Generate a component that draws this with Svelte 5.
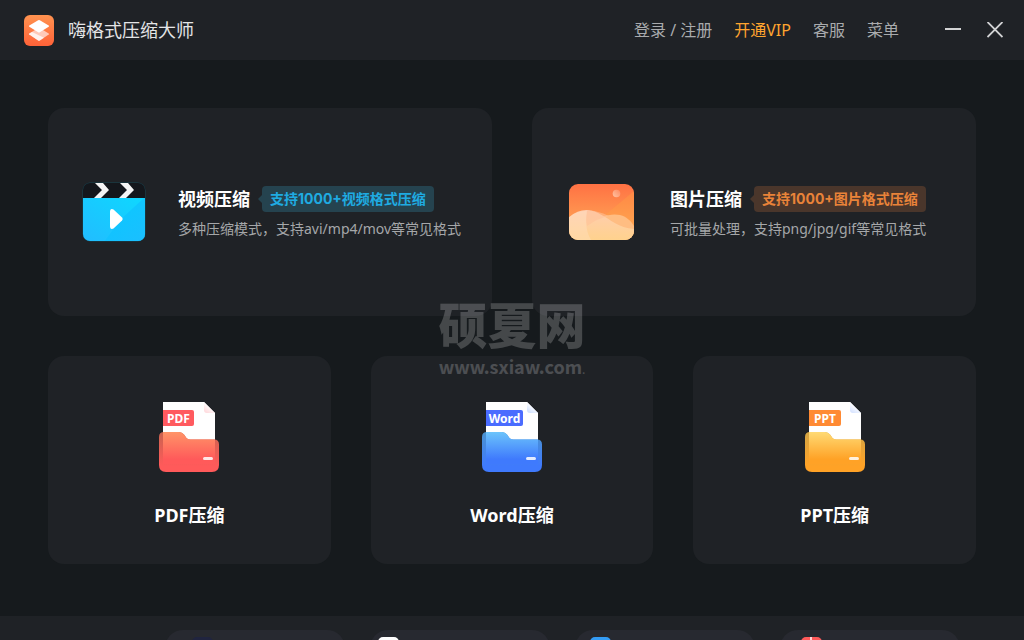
<script>
  const features = [
    { kind: 'video', title: '视频压缩', badge: '支持1000+视频格式压缩', text: '多种压缩模式，支持avi/mp4/mov等常见格式' },
    { kind: 'image', title: '图片压缩', badge: '支持1000+图片格式压缩', text: '可批量处理，支持png/jpg/gif等常见格式' }
  ];
  const documents = [
    { name: 'PDF', tag: '#ff5a5f', tagWidth: 31, top: '#ff9468', bottom: '#ff5a5a', side: '#c9634f', shade: '#ffd9dc' },
    { name: 'Word', tag: '#4a6cff', tagWidth: 37, top: '#6cc4fb', bottom: '#3f7afd', side: '#4a93cf', shade: '#cfe0ff' },
    { name: 'PPT', tag: '#ff8a33', tagWidth: 32, top: '#ffda74', bottom: '#ffa226', side: '#d3a545', shade: '#d5e2ff' }
  ];
  const tools = ['navy', 'white', 'blue', 'red'];
</script>

<div class="window">
  <header>
    <svg class="logo" viewBox="0 0 30 31" aria-hidden="true">
      <defs>
        <linearGradient id="logo-bg" x1="0" y1="0" x2="0" y2="1">
          <stop offset="0" stop-color="#ff9350" />
          <stop offset="1" stop-color="#ff6238" />
        </linearGradient>
      </defs>
      <rect width="30" height="31" rx="6" fill="url(#logo-bg)" />
      <path d="M5.300 18.400 14.200 13h1.600l8.900 5.400q.8.600 0 1.200L15.800 25.500q-.8.500-1.600 0L5.300 19.600q-.8-.6 0-1.200z" fill="#ffc9b8" />
      <path d="M5.300 19.600q-.8-.6 0-1.200L8 17l12 5.800-4.200 2.700q-.8.500-1.600 0z" fill="#fff" opacity=".75" />
      <path d="M5.300 11.800q-.8-.6 0-1.200L14.200 5.200q.8-.500 1.600 0l8.900 5.400q.8.600 0 1.200L15.800 17.200q-.8.500-1.600 0z" fill="#fff" />
    </svg>
    <h1>嗨格式压缩大师</h1>
    <nav>
      <a href="#login">登录 / 注册</a>
      <a href="#vip" class="vip">开通VIP</a>
      <a href="#service">客服</a>
      <a href="#menu">菜单</a>
    </nav>
    <div class="controls">
      <button type="button" aria-label="最小化">
        <svg viewBox="0 0 16 16"><path d="M0 7h16" stroke="#d2d3d4" stroke-width="2" /></svg>
      </button>
      <button type="button" aria-label="关闭">
        <svg viewBox="0 0 16 16"><path d="M.5 0l15 15M15.500 0l-15 15" stroke="#d2d3d4" stroke-width="1.800" /></svg>
      </button>
    </div>
  </header>

  <main>
    <div class="row features">
      {#each features as f}
        <button type="button" class="card feature {f.kind}">
          {#if f.kind === 'video'}
            <svg class="art" viewBox="0 0 64 60" aria-hidden="true">
              <defs>
                <linearGradient id="vid" x1="0" y1="1" x2="1" y2="0">
                  <stop offset="0" stop-color="#22bcff" />
                  <stop offset="1" stop-color="#0ed8ff" />
                </linearGradient>
                <linearGradient id="vid-ray" x1="0" y1="0" x2="1" y2="1">
                  <stop offset=".3" stop-color="#0cc4ff" />
                  <stop offset="1" stop-color="#1cbcff" />
                </linearGradient>
                <clipPath id="vid-clip"><rect x="1" y="1" width="62" height="58" rx="7" /></clipPath>
              </defs>
              <rect x=".5" y=".5" width="63" height="59" rx="8" fill="#174653" />
              <g clip-path="url(#vid-clip)">
                <path d="M0 0h64v16H0z" fill="#14171c" />
                <path d="M13 1h8l6 7-8 8h-7l8-8zM38 1h8l6 7-8 8h-7l8-8z" fill="#f5f5f5" />
                <path d="M0 16h64v44H0z" fill="url(#vid)" />
                <path d="M64 16v44H22L38 38 62 16z" fill="url(#vid-ray)" opacity=".8" />
              </g>
              <path d="M28 30q0-4 3.500-2.500L40 35.500q1.500 1.500 0 3L31.500 46.500Q28 48 28 44z" fill="#fff" />
            </svg>
          {:else}
            <svg class="art" viewBox="0 0 66 58" aria-hidden="true">
              <defs>
                <linearGradient id="sky" x1="0" y1="0" x2="0" y2="1">
                  <stop offset="0" stop-color="#ff7043" />
                  <stop offset="1" stop-color="#ffb45a" />
                </linearGradient>
                <linearGradient id="hill" x1="0" y1="0" x2="0" y2="1">
                  <stop offset="0" stop-color="#ffcdb0" />
                  <stop offset="1" stop-color="#ffd28c" />
                </linearGradient>
                <linearGradient id="sun" x1="1" y1="0" x2="0" y2="1">
                  <stop offset="0" stop-color="#ff8a60" />
                  <stop offset="1" stop-color="#ffc4a4" />
                </linearGradient>
                <clipPath id="img-clip"><rect x="1" y="1" width="65" height="56" rx="9" /></clipPath>
              </defs>
              <g clip-path="url(#img-clip)">
                <path d="M0 0h66v58H0z" fill="url(#sky)" />
                <path d="M66 8 30 38l36 12z" fill="#ffa246" opacity=".35" />
                <circle cx="48.500" cy="10.500" r="3.800" fill="url(#sun)" />
                <path d="M18 43C32 33 43 30 52 32c7 2 11 6 14 11v15H18z" fill="#ffbd82" />
                <path d="M0 35c10-9 20-10 30-5 14 7 20 15 36 16v12H0z" fill="url(#hill)" />
                <path d="M19 28q-2 8 0 15 11-8 22-10-6-3-11-4-5-2-11-1z" fill="#ffc298" opacity=".6" />
                <path d="M0 35c6-5 12-7 19-7-2 14 0 23 5 30H0z" fill="#ffe0c4" opacity=".4" />
              </g>
            </svg>
          {/if}
          <span class="copy">
            <span class="heading">
              <span class="title">{f.title}</span>
              <span class="badge">{f.badge}</span>
            </span>
            <span class="text">{f.text}</span>
          </span>
        </button>
      {/each}
    </div>

    <div class="row documents">
      {#each documents as d}
        <button type="button" class="card document">
          <svg class="folder" viewBox="0 0 60 70" aria-hidden="true">
            <defs>
              <linearGradient id="folder-{d.name}" x1="0" y1="0" x2="0" y2="1">
                <stop offset="0" stop-color={d.top} />
                <stop offset=".85" stop-color={d.bottom} />
              </linearGradient>
              <linearGradient id="fold-{d.name}" x1=".6" y1=".4" x2=".2" y2="1">
                <stop offset="0" stop-color="#fff" />
                <stop offset="1" stop-color={d.shade} />
              </linearGradient>
              <linearGradient id="side-{d.name}" x1="0" y1="0" x2="0" y2="1">
                <stop offset="0" stop-color={d.side} />
                <stop offset=".85" stop-color={d.bottom} />
              </linearGradient>
            </defs>
            <path d="M4 0h41l11 11v50H4z" fill="#fff" />
            <path d="M45 0v8q0 3 3 3h8z" fill="url(#fold-{d.name})" />
            <path d="M4 8h{d.tagWidth - 2}q2 0 2 2v12q0 2-2 2H4z" fill={d.tag} />
            <text x={4 + d.tagWidth / 2} y="20.500" text-anchor="middle">{d.name}</text>
            <path d="M0 35q0-5 5-5h15q3 0 5 2.500l2.500 3.500q1.500 1.500 4 1.500H55q5 0 5 5V63q0 7-7 7H7q-7 0-7-7z" fill="url(#side-{d.name})" />
            <path d="M4 30h16q3 0 5 2.500l2.500 3.500q1.500 1.500 4 1.500H56V62H4z" fill="url(#folder-{d.name})" />
            <rect x="44" y="55" width="10" height="3" rx="1.500" fill="#fff" opacity=".85" />
          </svg>
          <span class="title">{d.name}压缩</span>
        </button>
      {/each}
    </div>

    <div class="watermark" aria-hidden="true">
      <strong>硕夏网</strong>
      <span>www.sxiaw.com<small>.</small></span>
    </div>
  </main>

  <footer>
    {#each tools as tool}
      <div class="tool {tool}"><i></i></div>
    {/each}
  </footer>
</div>

<style>
  :global(body) {
    margin: 0;
    background: #161a1d;
  }

  .window {
    display: flex;
    flex-direction: column;
    height: 100vh;
    overflow: hidden;
    background: #161a1d;
    color: #fff;
    font-family: "Noto Sans", "Noto Sans CJK SC", sans-serif;
  }

  header {
    display: flex;
    align-items: center;
    flex: none;
    box-sizing: border-box;
    height: 60px;
    padding: 0 21px 0 24px;
    background: #1f2226;
  }

  .logo {
    width: 30px;
    height: 31px;
  }

  h1 {
    margin: 0 auto 0 14px;
    color: #e4e5e6;
    font-size: 18px;
    font-weight: 400;
    line-height: 24px;
  }

  nav {
    display: flex;
    gap: 22px;
  }

  nav a {
    color: #a9abad;
    font-size: 16px;
    line-height: 24px;
    text-decoration: none;
  }

  nav .vip {
    color: #ffa52f;
  }

  .controls {
    display: flex;
    gap: 26px;
    margin-left: 46px;
  }

  button {
    border: 0;
    padding: 0;
    background: none;
    color: inherit;
    font: inherit;
    cursor: pointer;
  }

  .controls svg {
    display: block;
    width: 16px;
    height: 16px;
  }

  main {
    position: relative;
    display: flex;
    flex-direction: column;
    flex: none;
    gap: 40px;
    padding: 48px 48px 52px;
  }

  .row {
    display: grid;
    gap: 40px;
  }

  .features {
    grid-template-columns: repeat(2, 1fr);
  }

  .documents {
    grid-template-columns: repeat(3, 1fr);
  }

  .card {
    display: flex;
    align-items: center;
    box-sizing: border-box;
    min-height: 208px;
    border-radius: 16px;
    background: #1f2226;
  }

  .title {
    font-size: 18px;
    font-weight: 700;
    line-height: 26px;
    white-space: nowrap;
  }

  .feature {
    text-align: left;
  }

  .art {
    flex: none;
  }

  .video {
    gap: 32px;
    padding-left: 34px;
  }

  .video .art {
    width: 64px;
    height: 60px;
  }

  .image {
    gap: 36px;
    padding-left: 36px;
  }

  .image .art {
    width: 66px;
    height: 58px;
  }

  .copy {
    display: flex;
    flex-direction: column;
    gap: 6px;
    padding-top: 2px;
  }

  .heading {
    display: flex;
    align-items: center;
    gap: 12px;
  }

  .badge {
    position: relative;
    padding: 0 8px;
    border-radius: 4px;
    background: #25434f;
    color: #1fabe2;
    font-family: Inter, "Noto Sans CJK SC", sans-serif;
    font-size: 14px;
    font-weight: 700;
    line-height: 26px;
    white-space: nowrap;
  }

  .badge::before {
    content: "";
    position: absolute;
    top: 9px;
    left: -4px;
    border: 4px solid transparent;
    border-right-color: #25434f;
    border-left: 0;
  }

  .image .badge {
    background: #4a362b;
    color: #e98339;
  }

  .image .badge::before {
    border-right-color: #4a362b;
  }

  .text {
    color: #a5a7a9;
    font-size: 14px;
    line-height: 22px;
    white-space: nowrap;
  }

  .document {
    flex-direction: column;
    justify-content: center;
    gap: 30px;
    padding-top: 10px;
  }

  .folder {
    width: 60px;
    height: 70px;
  }

  .folder text {
    fill: #fff;
    font-size: 12px;
    font-weight: 700;
  }

  .watermark {
    position: absolute;
    top: 235px;
    left: 50%;
    display: flex;
    flex-direction: column;
    align-items: center;
    transform: translateX(-50%);
    color: #fff;
    opacity: 0.2;
    pointer-events: none;
    white-space: nowrap;
  }

  .watermark strong {
    font-size: 49px;
    font-weight: 900;
    line-height: 60px;
  }

  .watermark span {
    font-family: "Noto Sans CJK SC", sans-serif;
    font-size: 18px;
    font-weight: 700;
    line-height: 22px;
  }

  .watermark small {
    font-size: 12px;
    font-weight: 400;
  }

  footer {
    display: flex;
    justify-content: flex-end;
    flex: 1;
    gap: 25px;
    min-height: 0;
    padding: 14px 64px 0;
    overflow: hidden;
    background: #1f2226;
  }

  .tool {
    flex: none;
    box-sizing: border-box;
    width: 180px;
    height: 36px;
    padding: 7px 0 0 15px;
    border-radius: 18px;
    background: #272930;
  }

  .tool i {
    display: block;
    width: 21px;
    height: 21px;
    border-radius: 5px;
  }

  .white {
    padding-left: 8px;
  }

  .navy {
    padding-left: 27px;
  }

  .red {
    padding-left: 21px;
  }

  .navy i { background: #20243f; }
  .white i { background: #fff; }
  .blue i { background: #349cf5; }
  .red i { background: linear-gradient(90deg, #ff5a5a 9px, #ffd5d5 9px, #ffd5d5 11px, #ff5a5a 11px); }
</style>
